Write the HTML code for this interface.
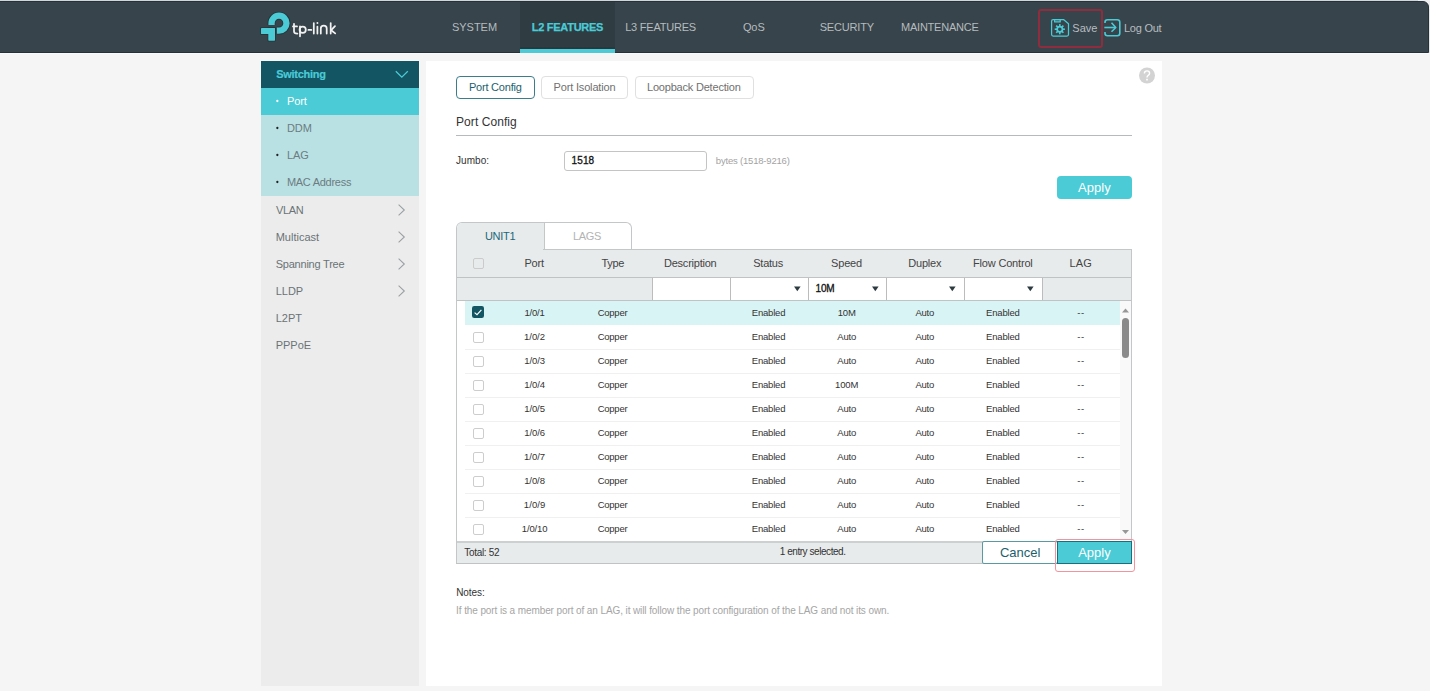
<!DOCTYPE html>
<html><head><meta charset="utf-8">
<style>
*{box-sizing:border-box;margin:0;padding:0}
html,body{width:1430px;height:691px;overflow:hidden;background:#f5f5f5;font-family:"Liberation Sans",sans-serif;}
.a{position:absolute}
.t{white-space:nowrap}
</style></head><body>
<div class="a" style="left:0px;top:0px;width:1430px;height:1px;background:#d3d6d8"></div>
<div class="a" style="left:1429px;top:0px;width:1px;height:53px;background:#e2e4e5"></div>
<div class="a" style="left:1418px;top:0px;width:12px;height:9px;background:#eceeef"></div>
<div class="a" style="left:-2px;top:1px;width:1431px;height:52px;background:#37444b;border:1px solid #25323a;border-top-right-radius:6px"></div>
<div class="a" style="left:0px;top:53px;width:1430px;height:1px;background:#fafafa"></div>
<div class="a" style="left:520px;top:2px;width:95px;height:50px;background:#2f3c42"></div>
<div class="a" style="left:520px;top:47px;width:95px;height:2px;background:#2b373c"></div>
<div class="a" style="left:520px;top:49px;width:95px;height:4px;background:#4acbd6"></div>
<div class="a" style="left:1038px;top:9px;width:65px;height:39px;border:2px solid #8e2d3d;border-radius:3px"></div>
<svg class="a" style="left:0;top:0" width="1430" height="60" viewBox="0 0 1430 60">
<g fill="none" stroke="#29343a" stroke-width="8"><path d="M271.55 24.9V23.15A7.45 7.45 0 1 1 279 30.6H276.9"/></g>
<path d="M271.55 24.9V23.15A7.45 7.45 0 1 1 279 30.6H276.9" fill="none" stroke="#4acbd6" stroke-width="6.3"/>
<rect x="260.2" y="27.2" width="15.6" height="7.7" fill="#29343a" rx="1"/>
<rect x="267.5" y="27.2" width="8.3" height="14.3" fill="#29343a" rx="1"/>
<rect x="261" y="28" width="14" height="6.1" fill="#4acbd6" rx="0.6"/>
<rect x="268.3" y="28" width="6.7" height="12.7" fill="#4acbd6" rx="0.6"/>
<g fill="none" stroke="#f2f2f2" stroke-width="1.75" stroke-linecap="round" stroke-linejoin="round">
<path d="M294 23.8V31.2Q294 33.6 297.4 33.6"/><path d="M293 26.4H297"/>
<path d="M300 26.4V36.3"/><circle cx="302.7" cy="29.8" r="3.1"/>
<path d="M308.4 29.9H311.3"/>
<path d="M313.8 23V33.6"/>
<path d="M317.4 26.7V33.6"/><circle cx="317.4" cy="23.0" r="0.95" fill="#f2f2f2" stroke="none"/>
<path d="M320.8 33.6V28.4Q320.8 25.6 323.75 25.6Q326.7 25.6 326.7 28.4V33.6"/>
<path d="M330.7 23V33.6"/><path d="M335 26.2L331.2 30.2L335.2 33.4"/>
</g>
<g fill="none" stroke="#4acbd6" stroke-width="1.25" stroke-linejoin="round">
<path d="M1051.6 21Q1051.6 19.5 1053.1 19.5H1063.5L1068.5 23.8V34.5Q1068.5 36 1067 36H1053.1Q1051.6 36 1051.6 34.5Z"/>
<rect x="1054.6" y="19.5" width="5.6" height="2.4"/>
</g>
<g transform="translate(1059.8 29.2)" fill="#4acbd6"><rect x="-0.8" y="-5.1" width="1.6" height="2.4" transform="rotate(0)"/><rect x="-0.8" y="-5.1" width="1.6" height="2.4" transform="rotate(45)"/><rect x="-0.8" y="-5.1" width="1.6" height="2.4" transform="rotate(90)"/><rect x="-0.8" y="-5.1" width="1.6" height="2.4" transform="rotate(135)"/><rect x="-0.8" y="-5.1" width="1.6" height="2.4" transform="rotate(180)"/><rect x="-0.8" y="-5.1" width="1.6" height="2.4" transform="rotate(225)"/><rect x="-0.8" y="-5.1" width="1.6" height="2.4" transform="rotate(270)"/><rect x="-0.8" y="-5.1" width="1.6" height="2.4" transform="rotate(315)"/><path fill-rule="evenodd" d="M-3.5 0A3.5 3.5 0 1 0 3.5 0A3.5 3.5 0 1 0 -3.5 0ZM-1.8 0A1.8 1.8 0 1 1 1.8 0A1.8 1.8 0 1 1 -1.8 0Z"/></g>
<g fill="none" stroke="#4acbd6" stroke-width="1.6" stroke-linecap="butt" stroke-linejoin="round">
<path d="M1105 22.9V22.3Q1105 19.8 1107.5 19.8H1117.3Q1119.8 19.8 1119.8 22.3V33.3Q1119.8 35.8 1117.3 35.8H1107.5Q1105 35.8 1105 33.3V32"/>
<path d="M1104.3 27.5H1115.2"/><path d="M1111.5 22.8L1115.8 27.5L1111.5 31.8"/>
</g>
</svg>
<div class="a" style="left:261px;top:61px;width:158px;height:625px;background:#ececec"></div>
<div class="a" style="left:261px;top:61px;width:158px;height:27px;background:#135563"></div>
<div class="a" style="left:261px;top:88px;width:158px;height:27px;background:#4acbd6"></div>
<div class="a" style="left:261px;top:115px;width:158px;height:81px;background:#b9e1e4"></div>
<svg class="a" style="left:394px;top:69px" width="16" height="10"><path d="M1.8 2.3L7.8 8.2L13.8 2.3" fill="none" stroke="#4acbd6" stroke-width="1.3"/></svg>
<svg class="a" style="left:274px;top:97.4px" width="7" height="8"><circle cx="3.35" cy="4.00" r="1.15" fill="#ffffff"/></svg>
<svg class="a" style="left:274px;top:124.30000000000001px" width="7" height="8"><circle cx="3.35" cy="4.00" r="1.15" fill="#222"/></svg>
<svg class="a" style="left:274px;top:151.3px" width="7" height="8"><circle cx="3.35" cy="4.00" r="1.15" fill="#222"/></svg>
<svg class="a" style="left:274px;top:178.3px" width="7" height="8"><circle cx="3.35" cy="4.00" r="1.15" fill="#222"/></svg>
<svg class="a" style="left:396px;top:202.5px" width="10" height="14"><path d="M2.6 1.6L8.3 7L2.6 12.4" fill="none" stroke="#9aa1a4" stroke-width="1.1"/></svg>
<svg class="a" style="left:396px;top:229.5px" width="10" height="14"><path d="M2.6 1.6L8.3 7L2.6 12.4" fill="none" stroke="#9aa1a4" stroke-width="1.1"/></svg>
<svg class="a" style="left:396px;top:256.5px" width="10" height="14"><path d="M2.6 1.6L8.3 7L2.6 12.4" fill="none" stroke="#9aa1a4" stroke-width="1.1"/></svg>
<svg class="a" style="left:396px;top:283.5px" width="10" height="14"><path d="M2.6 1.6L8.3 7L2.6 12.4" fill="none" stroke="#9aa1a4" stroke-width="1.1"/></svg>
<div class="a" style="left:426px;top:61px;width:736px;height:625px;background:#fff"></div>
<svg class="a" style="left:1139px;top:67px" width="16" height="17"><circle cx="8" cy="8.5" r="8" fill="#d3d3d3"/><path d="M5.4 6.6Q5.4 3.9 8 3.9Q10.6 3.9 10.6 6.3Q10.6 7.6 9.2 8.4Q8 9.1 8 10.6" fill="none" stroke="#fff" stroke-width="1.4"/><rect x="7.2" y="11.8" width="1.6" height="1.7" fill="#fff"/></svg>
<div class="a" style="left:456px;top:76px;width:79px;height:23px;border:1px solid #3b7d8b;border-radius:4px"></div>
<div class="a" style="left:541px;top:76px;width:87px;height:23px;border:1px solid #e0e0e0;border-radius:4px"></div>
<div class="a" style="left:635px;top:76px;width:119px;height:23px;border:1px solid #e0e0e0;border-radius:4px"></div>
<div class="a" style="left:456px;top:135px;width:676px;height:1px;background:#b5babc"></div>
<div class="a" style="left:564px;top:151px;width:143px;height:20px;border:1px solid #c4c4c4;border-radius:3px;background:#fff"></div>
<div class="a" style="left:1057px;top:176px;width:75px;height:23px;background:#4acbd6;border-radius:4px"></div>
<div class="a" style="left:456px;top:222px;width:176px;height:28px;border:1px solid #c4c7c8;border-bottom:none;border-radius:6px 6px 0 0;background:#fff;overflow:hidden"><div style="position:absolute;left:0;top:0;width:87px;height:28px;background:#e8ebec"></div><div style="position:absolute;left:87px;top:0;width:1px;height:28px;background:#c4c7c8"></div></div>
<div class="a" style="left:456px;top:249px;width:676px;height:315px;border:1px solid #c4c7c8;border-top:none;background:#fff"></div>
<div class="a" style="left:457px;top:249px;width:674px;height:28px;background:#e8ebec"></div>
<div class="a" style="left:543px;top:249px;width:589px;height:1px;background:#c4c7c8"></div>
<div class="a" style="left:457px;top:277px;width:674px;height:1px;background:#bfc3c4"></div>
<div class="a" style="left:457px;top:278px;width:674px;height:22px;background:#e8ebec"></div>
<div class="a" style="left:457px;top:300px;width:674px;height:1px;background:#bfc3c4"></div>
<div class="a" style="left:652px;top:278px;width:78px;height:22px;background:#fff"></div>
<div class="a" style="left:730px;top:278px;width:78px;height:22px;background:#fff"></div>
<div class="a" style="left:808px;top:278px;width:78px;height:22px;background:#fff"></div>
<div class="a" style="left:886px;top:278px;width:78px;height:22px;background:#fff"></div>
<div class="a" style="left:964px;top:278px;width:78px;height:22px;background:#fff"></div>
<div class="a" style="left:652px;top:278px;width:1px;height:22px;background:#bcbcbc"></div>
<div class="a" style="left:730px;top:278px;width:1px;height:22px;background:#bcbcbc"></div>
<div class="a" style="left:808px;top:278px;width:1px;height:22px;background:#bcbcbc"></div>
<div class="a" style="left:886px;top:278px;width:1px;height:22px;background:#bcbcbc"></div>
<div class="a" style="left:964px;top:278px;width:1px;height:22px;background:#bcbcbc"></div>
<div class="a" style="left:1042px;top:278px;width:1px;height:22px;background:#bcbcbc"></div>
<svg class="a" style="left:794px;top:286px" width="7" height="6"><path d="M0 0.6H6.6L3.3 5.3Z" fill="#2d3b40"/></svg>
<svg class="a" style="left:872px;top:286px" width="7" height="6"><path d="M0 0.6H6.6L3.3 5.3Z" fill="#2d3b40"/></svg>
<svg class="a" style="left:949.4px;top:286px" width="7" height="6"><path d="M0 0.6H6.6L3.3 5.3Z" fill="#2d3b40"/></svg>
<svg class="a" style="left:1027.2px;top:286px" width="7" height="6"><path d="M0 0.6H6.6L3.3 5.3Z" fill="#2d3b40"/></svg>
<div class="a" style="left:473px;top:258px;width:11px;height:11px;border:1px solid #cbcbcb;border-radius:2px"></div>
<div class="a" style="left:465px;top:301px;width:655px;height:24px;background:#d9f4f5"></div>
<div class="a" style="left:465px;top:349px;width:655px;height:1px;background:#f0f0f0"></div>
<div class="a" style="left:465px;top:373px;width:655px;height:1px;background:#f0f0f0"></div>
<div class="a" style="left:465px;top:397px;width:655px;height:1px;background:#f0f0f0"></div>
<div class="a" style="left:465px;top:421px;width:655px;height:1px;background:#f0f0f0"></div>
<div class="a" style="left:465px;top:445px;width:655px;height:1px;background:#f0f0f0"></div>
<div class="a" style="left:465px;top:469px;width:655px;height:1px;background:#f0f0f0"></div>
<div class="a" style="left:465px;top:493px;width:655px;height:1px;background:#f0f0f0"></div>
<div class="a" style="left:465px;top:517px;width:655px;height:1px;background:#f0f0f0"></div>
<svg class="a" style="left:472px;top:306px" width="12" height="12"><rect x="0" y="0" width="12" height="12" rx="2.2" fill="#125563"/><path d="M2.6 6.6L5 8.7L9.4 3.9" fill="none" stroke="#fff" stroke-width="1.2"/></svg>
<div class="a" style="left:473px;top:332px;width:11px;height:11px;border:1px solid #cdcdcd;border-radius:2px;background:#fff"></div>
<div class="a" style="left:473px;top:356px;width:11px;height:11px;border:1px solid #cdcdcd;border-radius:2px;background:#fff"></div>
<div class="a" style="left:473px;top:380px;width:11px;height:11px;border:1px solid #cdcdcd;border-radius:2px;background:#fff"></div>
<div class="a" style="left:473px;top:404px;width:11px;height:11px;border:1px solid #cdcdcd;border-radius:2px;background:#fff"></div>
<div class="a" style="left:473px;top:428px;width:11px;height:11px;border:1px solid #cdcdcd;border-radius:2px;background:#fff"></div>
<div class="a" style="left:473px;top:452px;width:11px;height:11px;border:1px solid #cdcdcd;border-radius:2px;background:#fff"></div>
<div class="a" style="left:473px;top:476px;width:11px;height:11px;border:1px solid #cdcdcd;border-radius:2px;background:#fff"></div>
<div class="a" style="left:473px;top:500px;width:11px;height:11px;border:1px solid #cdcdcd;border-radius:2px;background:#fff"></div>
<div class="a" style="left:473px;top:524px;width:11px;height:11px;border:1px solid #cdcdcd;border-radius:2px;background:#fff"></div>
<div class="a" style="left:1120px;top:301px;width:11px;height:240px;background:#f9f9f9"></div>
<svg class="a" style="left:1121px;top:307px" width="9" height="7"><path d="M1 5.5H8L4.5 1.5Z" fill="#979797"/></svg>
<div class="a" style="left:1122px;top:318px;width:7px;height:40px;background:#8a8a8a;border-radius:3.5px"></div>
<svg class="a" style="left:1121px;top:529px" width="9" height="7"><path d="M1 1H8L4.5 5Z" fill="#979797"/></svg>
<div class="a" style="left:457px;top:541px;width:674px;height:2px;background:#ccd0d1"></div>
<div class="a" style="left:457px;top:543px;width:674px;height:20px;background:#e8ebec"></div>
<div class="a" style="left:456px;top:563px;width:676px;height:1px;background:#bfc3c4"></div>
<div class="a" style="left:982px;top:541px;width:76px;height:23px;background:#fff;border:1.5px solid #5a98a3;border-radius:2px"></div>
<div class="a" style="left:1057px;top:541px;width:75px;height:23px;background:#4acbd6;border:1px solid #1f6d7c"></div>
<div class="a" style="left:1055px;top:539px;width:80px;height:33px;border:1.5px solid #f4929d;border-radius:3px"></div>
<div class="a t" style="left:451.9px;top:21.7px;font-size:11px;line-height:11px;color:#b5bbbe;">SYSTEM</div>
<div class="a t" style="left:531.7px;top:21.7px;font-size:11px;line-height:11px;color:#4acbd6;font-weight:bold;letter-spacing:-0.26px;-webkit-text-stroke:0.25px #4acbd6;">L2 FEATURES</div>
<div class="a t" style="left:625.2px;top:21.7px;font-size:11px;line-height:11px;color:#b5bbbe;letter-spacing:-0.22px;">L3 FEATURES</div>
<div class="a t" style="left:742.9px;top:21.7px;font-size:11px;line-height:11px;color:#b5bbbe;letter-spacing:-0.09px;">QoS</div>
<div class="a t" style="left:819.7px;top:21.7px;font-size:11px;line-height:11px;color:#b5bbbe;letter-spacing:-0.17px;">SECURITY</div>
<div class="a t" style="left:901.0px;top:21.7px;font-size:11px;line-height:11px;color:#b5bbbe;letter-spacing:-0.22px;">MAINTENANCE</div>
<div class="a t" style="left:1072.3px;top:22.8px;font-size:11px;line-height:11px;color:#b8bdc0;">Save</div>
<div class="a t" style="left:1123.9px;top:22.8px;font-size:11px;line-height:11px;color:#b8bdc0;letter-spacing:-0.23px;">Log Out</div>
<div class="a t" style="left:276.2px;top:68.9px;font-size:11px;line-height:11px;color:#4acbd6;font-weight:bold;letter-spacing:-0.27px;-webkit-text-stroke:0.2px #4acbd6;">Switching</div>
<div class="a t" style="left:286.9px;top:95.9px;font-size:11px;line-height:11px;color:#ffffff;letter-spacing:-0.05px;">Port</div>
<div class="a t" style="left:286.9px;top:123.1px;font-size:11px;line-height:11px;color:#6c7c80;letter-spacing:-0.02px;">DDM</div>
<div class="a t" style="left:286.9px;top:149.9px;font-size:11px;line-height:11px;color:#6c7c80;">LAG</div>
<div class="a t" style="left:286.9px;top:176.9px;font-size:11px;line-height:11px;color:#6c7c80;letter-spacing:-0.27px;">MAC Address</div>
<div class="a t" style="left:275.9px;top:204.7px;font-size:11px;line-height:11px;color:#6a7376;letter-spacing:-0.28px;">VLAN</div>
<div class="a t" style="left:275.7px;top:231.7px;font-size:11px;line-height:11px;color:#6a7376;">Multicast</div>
<div class="a t" style="left:275.7px;top:258.7px;font-size:11px;line-height:11px;color:#6a7376;letter-spacing:-0.22px;">Spanning Tree</div>
<div class="a t" style="left:275.7px;top:285.7px;font-size:11px;line-height:11px;color:#6a7376;">LLDP</div>
<div class="a t" style="left:275.7px;top:312.7px;font-size:11px;line-height:11px;color:#6a7376;">L2PT</div>
<div class="a t" style="left:275.7px;top:339.7px;font-size:11px;line-height:11px;color:#6a7376;">PPPoE</div>
<div class="a t" style="left:468.9px;top:81.7px;font-size:11px;line-height:11px;color:#1d5f6d;letter-spacing:-0.20px;">Port Config</div>
<div class="a t" style="left:553.5px;top:81.7px;font-size:11px;line-height:11px;color:#707070;letter-spacing:-0.16px;">Port Isolation</div>
<div class="a t" style="left:647.0px;top:81.7px;font-size:11px;line-height:11px;color:#707070;letter-spacing:-0.20px;">Loopback Detection</div>
<div class="a t" style="left:456.0px;top:115.6px;font-size:12px;line-height:12px;color:#333333;letter-spacing:0.07px;">Port Config</div>
<div class="a t" style="left:456.1px;top:155.5px;font-size:10px;line-height:10px;color:#333333;letter-spacing:0.02px;">Jumbo:</div>
<div class="a t" style="left:571.5px;top:155.5px;font-size:10px;line-height:10px;color:#111111;letter-spacing:0.13px;-webkit-text-stroke:0.3px #111;">1518</div>
<div class="a t" style="left:715.8px;top:156.0px;font-size:9.5px;line-height:9.5px;color:#a3a3a3;letter-spacing:-0.19px;">bytes (1518-9216)</div>
<div class="a t" style="left:1078.0px;top:181.0px;font-size:13px;line-height:13px;color:#ffffff;letter-spacing:0.07px;">Apply</div>
<div class="a t" style="left:484.9px;top:230.7px;font-size:11px;line-height:11px;color:#1b6878;letter-spacing:-0.25px;">UNIT1</div>
<div class="a t" style="left:573.0px;top:230.7px;font-size:11px;line-height:11px;color:#b3b3b3;letter-spacing:-0.35px;">LAGS</div>
<div class="a t" style="left:815.5px;top:283.5px;font-size:10px;line-height:10px;color:#111111;letter-spacing:-0.14px;-webkit-text-stroke:0.3px #111;">10M</div>
<div class="a t" style="left:524.4px;top:258.3px;font-size:11px;line-height:11px;color:#444444;letter-spacing:-0.15px;">Port</div>
<div class="a t" style="left:601.4px;top:258.3px;font-size:11px;line-height:11px;color:#444444;letter-spacing:-0.31px;">Type</div>
<div class="a t" style="left:664.0px;top:258.3px;font-size:11px;line-height:11px;color:#444444;letter-spacing:-0.23px;">Description</div>
<div class="a t" style="left:753.2px;top:258.3px;font-size:11px;line-height:11px;color:#444444;letter-spacing:-0.22px;">Status</div>
<div class="a t" style="left:831.0px;top:258.3px;font-size:11px;line-height:11px;color:#444444;letter-spacing:-0.15px;">Speed</div>
<div class="a t" style="left:908.3px;top:258.3px;font-size:11px;line-height:11px;color:#444444;letter-spacing:-0.21px;">Duplex</div>
<div class="a t" style="left:973.0px;top:258.3px;font-size:11px;line-height:11px;color:#444444;letter-spacing:-0.18px;">Flow Control</div>
<div class="a t" style="left:1069.5px;top:258.3px;font-size:11px;line-height:11px;color:#444444;letter-spacing:0.19px;">LAG</div>
<div class="a t" style="left:524.4px;top:308.2px;font-size:9.5px;line-height:9.5px;color:#333333;letter-spacing:-0.17px;">1/0/1</div>
<div class="a t" style="left:597.7px;top:308.2px;font-size:9.5px;line-height:9.5px;color:#333333;letter-spacing:-0.25px;">Copper</div>
<div class="a t" style="left:751.8px;top:308.2px;font-size:9.5px;line-height:9.5px;color:#333333;letter-spacing:-0.20px;">Enabled</div>
<div class="a t" style="left:837.8px;top:308.2px;font-size:9.5px;line-height:9.5px;color:#333333;letter-spacing:-0.21px;">10M</div>
<div class="a t" style="left:915.4px;top:308.2px;font-size:9.5px;line-height:9.5px;color:#333333;letter-spacing:-0.21px;">Auto</div>
<div class="a t" style="left:986.1px;top:308.2px;font-size:9.5px;line-height:9.5px;color:#333333;letter-spacing:-0.20px;">Enabled</div>
<div class="a t" style="left:1077.3px;top:308.2px;font-size:9.5px;line-height:9.5px;color:#333333;letter-spacing:0.65px;">--</div>
<div class="a t" style="left:524.1px;top:332.2px;font-size:9.5px;line-height:9.5px;color:#333333;letter-spacing:-0.06px;">1/0/2</div>
<div class="a t" style="left:597.7px;top:332.2px;font-size:9.5px;line-height:9.5px;color:#333333;letter-spacing:-0.25px;">Copper</div>
<div class="a t" style="left:751.8px;top:332.2px;font-size:9.5px;line-height:9.5px;color:#333333;letter-spacing:-0.20px;">Enabled</div>
<div class="a t" style="left:837.3px;top:332.2px;font-size:9.5px;line-height:9.5px;color:#333333;letter-spacing:-0.21px;">Auto</div>
<div class="a t" style="left:915.4px;top:332.2px;font-size:9.5px;line-height:9.5px;color:#333333;letter-spacing:-0.21px;">Auto</div>
<div class="a t" style="left:986.1px;top:332.2px;font-size:9.5px;line-height:9.5px;color:#333333;letter-spacing:-0.20px;">Enabled</div>
<div class="a t" style="left:1077.3px;top:332.2px;font-size:9.5px;line-height:9.5px;color:#333333;letter-spacing:0.65px;">--</div>
<div class="a t" style="left:524.2px;top:356.2px;font-size:9.5px;line-height:9.5px;color:#333333;letter-spacing:-0.08px;">1/0/3</div>
<div class="a t" style="left:597.7px;top:356.2px;font-size:9.5px;line-height:9.5px;color:#333333;letter-spacing:-0.25px;">Copper</div>
<div class="a t" style="left:751.8px;top:356.2px;font-size:9.5px;line-height:9.5px;color:#333333;letter-spacing:-0.20px;">Enabled</div>
<div class="a t" style="left:837.3px;top:356.2px;font-size:9.5px;line-height:9.5px;color:#333333;letter-spacing:-0.21px;">Auto</div>
<div class="a t" style="left:915.4px;top:356.2px;font-size:9.5px;line-height:9.5px;color:#333333;letter-spacing:-0.21px;">Auto</div>
<div class="a t" style="left:986.1px;top:356.2px;font-size:9.5px;line-height:9.5px;color:#333333;letter-spacing:-0.20px;">Enabled</div>
<div class="a t" style="left:1077.3px;top:356.2px;font-size:9.5px;line-height:9.5px;color:#333333;letter-spacing:0.65px;">--</div>
<div class="a t" style="left:524.3px;top:380.2px;font-size:9.5px;line-height:9.5px;color:#333333;letter-spacing:-0.12px;">1/0/4</div>
<div class="a t" style="left:597.7px;top:380.2px;font-size:9.5px;line-height:9.5px;color:#333333;letter-spacing:-0.25px;">Copper</div>
<div class="a t" style="left:751.8px;top:380.2px;font-size:9.5px;line-height:9.5px;color:#333333;letter-spacing:-0.20px;">Enabled</div>
<div class="a t" style="left:835.1px;top:380.2px;font-size:9.5px;line-height:9.5px;color:#333333;letter-spacing:-0.15px;">100M</div>
<div class="a t" style="left:915.4px;top:380.2px;font-size:9.5px;line-height:9.5px;color:#333333;letter-spacing:-0.21px;">Auto</div>
<div class="a t" style="left:986.1px;top:380.2px;font-size:9.5px;line-height:9.5px;color:#333333;letter-spacing:-0.20px;">Enabled</div>
<div class="a t" style="left:1077.3px;top:380.2px;font-size:9.5px;line-height:9.5px;color:#333333;letter-spacing:0.65px;">--</div>
<div class="a t" style="left:524.2px;top:404.2px;font-size:9.5px;line-height:9.5px;color:#333333;letter-spacing:-0.09px;">1/0/5</div>
<div class="a t" style="left:597.7px;top:404.2px;font-size:9.5px;line-height:9.5px;color:#333333;letter-spacing:-0.25px;">Copper</div>
<div class="a t" style="left:751.8px;top:404.2px;font-size:9.5px;line-height:9.5px;color:#333333;letter-spacing:-0.20px;">Enabled</div>
<div class="a t" style="left:837.3px;top:404.2px;font-size:9.5px;line-height:9.5px;color:#333333;letter-spacing:-0.21px;">Auto</div>
<div class="a t" style="left:915.4px;top:404.2px;font-size:9.5px;line-height:9.5px;color:#333333;letter-spacing:-0.21px;">Auto</div>
<div class="a t" style="left:986.1px;top:404.2px;font-size:9.5px;line-height:9.5px;color:#333333;letter-spacing:-0.20px;">Enabled</div>
<div class="a t" style="left:1077.3px;top:404.2px;font-size:9.5px;line-height:9.5px;color:#333333;letter-spacing:0.65px;">--</div>
<div class="a t" style="left:524.2px;top:428.2px;font-size:9.5px;line-height:9.5px;color:#333333;letter-spacing:-0.08px;">1/0/6</div>
<div class="a t" style="left:597.7px;top:428.2px;font-size:9.5px;line-height:9.5px;color:#333333;letter-spacing:-0.25px;">Copper</div>
<div class="a t" style="left:751.8px;top:428.2px;font-size:9.5px;line-height:9.5px;color:#333333;letter-spacing:-0.20px;">Enabled</div>
<div class="a t" style="left:837.3px;top:428.2px;font-size:9.5px;line-height:9.5px;color:#333333;letter-spacing:-0.21px;">Auto</div>
<div class="a t" style="left:915.4px;top:428.2px;font-size:9.5px;line-height:9.5px;color:#333333;letter-spacing:-0.21px;">Auto</div>
<div class="a t" style="left:986.1px;top:428.2px;font-size:9.5px;line-height:9.5px;color:#333333;letter-spacing:-0.20px;">Enabled</div>
<div class="a t" style="left:1077.3px;top:428.2px;font-size:9.5px;line-height:9.5px;color:#333333;letter-spacing:0.65px;">--</div>
<div class="a t" style="left:524.1px;top:452.2px;font-size:9.5px;line-height:9.5px;color:#333333;letter-spacing:-0.02px;">1/0/7</div>
<div class="a t" style="left:597.7px;top:452.2px;font-size:9.5px;line-height:9.5px;color:#333333;letter-spacing:-0.25px;">Copper</div>
<div class="a t" style="left:751.8px;top:452.2px;font-size:9.5px;line-height:9.5px;color:#333333;letter-spacing:-0.20px;">Enabled</div>
<div class="a t" style="left:837.3px;top:452.2px;font-size:9.5px;line-height:9.5px;color:#333333;letter-spacing:-0.21px;">Auto</div>
<div class="a t" style="left:915.4px;top:452.2px;font-size:9.5px;line-height:9.5px;color:#333333;letter-spacing:-0.21px;">Auto</div>
<div class="a t" style="left:986.1px;top:452.2px;font-size:9.5px;line-height:9.5px;color:#333333;letter-spacing:-0.20px;">Enabled</div>
<div class="a t" style="left:1077.3px;top:452.2px;font-size:9.5px;line-height:9.5px;color:#333333;letter-spacing:0.65px;">--</div>
<div class="a t" style="left:524.2px;top:476.2px;font-size:9.5px;line-height:9.5px;color:#333333;letter-spacing:-0.10px;">1/0/8</div>
<div class="a t" style="left:597.7px;top:476.2px;font-size:9.5px;line-height:9.5px;color:#333333;letter-spacing:-0.25px;">Copper</div>
<div class="a t" style="left:751.8px;top:476.2px;font-size:9.5px;line-height:9.5px;color:#333333;letter-spacing:-0.20px;">Enabled</div>
<div class="a t" style="left:837.3px;top:476.2px;font-size:9.5px;line-height:9.5px;color:#333333;letter-spacing:-0.21px;">Auto</div>
<div class="a t" style="left:915.4px;top:476.2px;font-size:9.5px;line-height:9.5px;color:#333333;letter-spacing:-0.21px;">Auto</div>
<div class="a t" style="left:986.1px;top:476.2px;font-size:9.5px;line-height:9.5px;color:#333333;letter-spacing:-0.20px;">Enabled</div>
<div class="a t" style="left:1077.3px;top:476.2px;font-size:9.5px;line-height:9.5px;color:#333333;letter-spacing:0.65px;">--</div>
<div class="a t" style="left:523.8px;top:500.2px;font-size:9.5px;line-height:9.5px;color:#333333;letter-spacing:0.09px;">1/0/9</div>
<div class="a t" style="left:597.7px;top:500.2px;font-size:9.5px;line-height:9.5px;color:#333333;letter-spacing:-0.25px;">Copper</div>
<div class="a t" style="left:751.8px;top:500.2px;font-size:9.5px;line-height:9.5px;color:#333333;letter-spacing:-0.20px;">Enabled</div>
<div class="a t" style="left:837.3px;top:500.2px;font-size:9.5px;line-height:9.5px;color:#333333;letter-spacing:-0.21px;">Auto</div>
<div class="a t" style="left:915.4px;top:500.2px;font-size:9.5px;line-height:9.5px;color:#333333;letter-spacing:-0.21px;">Auto</div>
<div class="a t" style="left:986.1px;top:500.2px;font-size:9.5px;line-height:9.5px;color:#333333;letter-spacing:-0.20px;">Enabled</div>
<div class="a t" style="left:1077.3px;top:500.2px;font-size:9.5px;line-height:9.5px;color:#333333;letter-spacing:0.65px;">--</div>
<div class="a t" style="left:521.8px;top:524.2px;font-size:9.5px;line-height:9.5px;color:#333333;letter-spacing:-0.16px;">1/0/10</div>
<div class="a t" style="left:597.7px;top:524.2px;font-size:9.5px;line-height:9.5px;color:#333333;letter-spacing:-0.25px;">Copper</div>
<div class="a t" style="left:751.8px;top:524.2px;font-size:9.5px;line-height:9.5px;color:#333333;letter-spacing:-0.20px;">Enabled</div>
<div class="a t" style="left:837.3px;top:524.2px;font-size:9.5px;line-height:9.5px;color:#333333;letter-spacing:-0.21px;">Auto</div>
<div class="a t" style="left:915.4px;top:524.2px;font-size:9.5px;line-height:9.5px;color:#333333;letter-spacing:-0.21px;">Auto</div>
<div class="a t" style="left:986.1px;top:524.2px;font-size:9.5px;line-height:9.5px;color:#333333;letter-spacing:-0.20px;">Enabled</div>
<div class="a t" style="left:1077.3px;top:524.2px;font-size:9.5px;line-height:9.5px;color:#333333;letter-spacing:0.65px;">--</div>
<div class="a t" style="left:464.2px;top:547.5px;font-size:10px;line-height:10px;color:#333333;letter-spacing:-0.30px;">Total: 52</div>
<div class="a t" style="left:779.7px;top:547.3px;font-size:10px;line-height:10px;color:#333333;letter-spacing:-0.44px;">1 entry selected.</div>
<div class="a t" style="left:999.9px;top:546.1px;font-size:13px;line-height:13px;color:#1d5f6d;">Cancel</div>
<div class="a t" style="left:1078.2px;top:546.1px;font-size:13px;line-height:13px;color:#ffffff;">Apply</div>
<div class="a t" style="left:456.2px;top:588.2px;font-size:10px;line-height:10px;color:#333333;letter-spacing:-0.07px;">Notes:</div>
<div class="a t" style="left:456.1px;top:605.5px;font-size:10px;line-height:10px;color:#a5a5a5;letter-spacing:-0.10px;">If the port is a member port of an LAG, it will follow the port configuration of the LAG and not its own.</div>
</body></html>
